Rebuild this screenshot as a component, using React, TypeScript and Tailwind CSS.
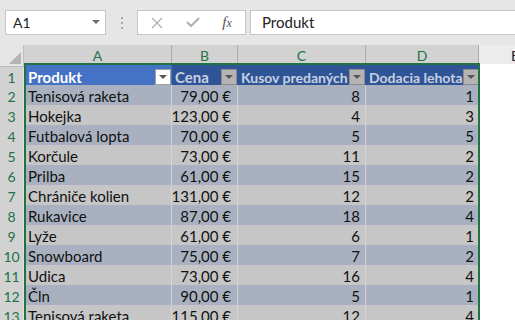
import React from "react";

const rows: [string, string, string, string][] = [
  ["Tenisová raketa", "79,00 €", "8", "1"],
  ["Hokejka", "123,00 €", "4", "3"],
  ["Futbalová lopta", "70,00 €", "5", "5"],
  ["Korčule", "73,00 €", "11", "2"],
  ["Prilba", "61,00 €", "15", "2"],
  ["Chrániče kolien", "131,00 €", "12", "2"],
  ["Rukavice", "87,00 €", "18", "4"],
  ["Lyže", "61,00 €", "6", "1"],
  ["Snowboard", "75,00 €", "7", "2"],
  ["Udica", "73,00 €", "16", "4"],
  ["Čln", "90,00 €", "5", "1"],
  ["Tenisová raketa", "115,00 €", "12", "4"],
];

function FilterBtn({ active }: { active?: boolean }) {
  return (
    <div
      className={
        "w-[16px] h-[16px] shrink-0 flex items-center justify-center border " +
        (active ? "bg-white border-[#a0a0a0]" : "bg-[#b4b4b4] border-[#8c8c8c]")
      }
    >
      <svg width="8" height="5" viewBox="0 0 8 5">
        <path d="M0 0 L8 0 L4 4 Z" fill="#555" />
      </svg>
    </div>
  );
}

const grid = "grid grid-cols-[24px_148px_66px_128px_113px_36px]";

export default function App() {
  return (
    <div
      className="w-[515px] h-[320px] overflow-hidden bg-[#e6e6e6] relative"
      style={{ fontFamily: "Lato, 'Liberation Sans', sans-serif" }}
    >
      {/* toolbar */}
      <div className="h-[45px] flex items-center pl-[5px]">
        <div className="w-[101px] h-[25px] bg-white border border-[#c6c6c6] flex items-center justify-between pl-[7px] pr-[5px] text-[14px] text-[#222]">
          <span>A1</span>
          <svg width="8" height="5" viewBox="0 0 8 5">
            <path d="M0 0 L8 0 L4 4 Z" fill="#6e6e6e" />
          </svg>
        </div>
        <div className="w-[31px] flex flex-col items-center gap-[3px]">
          <div className="w-[2px] h-[2px] bg-[#a8a8a8]" />
          <div className="w-[2px] h-[2px] bg-[#a8a8a8]" />
          <div className="w-[2px] h-[2px] bg-[#a8a8a8]" />
        </div>
        <div className="w-[109px] h-[25px] bg-white border border-[#c6c6c6] flex items-center">
          <div className="w-[38px] flex justify-center">
            <svg width="12" height="12" viewBox="0 0 12 12">
              <path d="M1 1 L11 11 M11 1 L1 11" stroke="#b0b0b0" strokeWidth="1.3" />
            </svg>
          </div>
          <div className="w-[34px] flex justify-center">
            <svg width="14" height="11" viewBox="0 0 14 11">
              <path d="M1 5 L5 9 L13 1" stroke="#b0b0b0" strokeWidth="2" fill="none" />
            </svg>
          </div>
          <div
            className="w-[34px] flex justify-center items-baseline italic text-[#555] leading-none"
            style={{ fontFamily: "'Liberation Serif', serif" }}
          >
            <span className="text-[15px]">f</span>
            <span className="text-[12px]">x</span>
          </div>
        </div>
        <div className="ml-[4px] flex-1 h-[25px] bg-white border border-[#c6c6c6] border-r-0 flex items-center pl-[11px] text-[15px] text-[#222]">
          Produkt
        </div>
      </div>

      {/* column headers */}
      <div className={grid + " h-[19px] text-[14px]"}>
        <div className="bg-[#e6e6e6] border-r border-b border-[#bdbdbd] relative">
          <svg className="absolute right-[2px] bottom-[2px]" width="12" height="12" viewBox="0 0 12 12">
            <path d="M12 0 L12 12 L0 12 Z" fill="#b4b4b4" />
          </svg>
        </div>
        {["A", "B", "C", "D"].map((c) => (
          <div
            key={c}
            className="bg-[#d2d2d2] border-r border-b border-[#ababab] flex items-center justify-center text-[#217346]"
          >
            {c}
          </div>
        ))}
        <div className="bg-[#ececec] border-b border-[#bdbdbd] flex items-center justify-end text-[#222]">
          <span className="-mr-[4px]">E</span>
        </div>
      </div>

      {/* header row */}
      <div className={grid + " h-[21px] text-[14px]"}>
        <div className="bg-[#d2d2d2] border-r border-b border-[#e0e0e0] flex items-center justify-center text-[#217346] pt-[2px]">
          1
        </div>
        <div className="bg-[#4472c4] border-b border-[#2f528f] flex items-center justify-between pl-[4px] pr-[1px] pt-[2px] font-bold text-white text-[15px]">
          <span>Produkt</span>
          <FilterBtn active />
        </div>
        <div className="bg-[#2f5597] border-b border-[#2f528f] flex items-center justify-between pl-[3px] pr-[1px] pt-[2px] font-bold text-[#c8d0e0] text-[15px]">
          <span>Cena</span>
          <FilterBtn />
        </div>
        <div className="bg-[#2f5597] border-b border-[#2f528f] flex items-center justify-between pl-[3px] pr-[1px] pt-[2px] font-bold text-[#c8d0e0]">
          <span className="whitespace-nowrap">Kusov predaných</span>
          <FilterBtn />
        </div>
        <div className="bg-[#2f5597] border-b border-[#2f528f] flex items-center justify-between pl-[3px] pr-[1px] pt-[2px] font-bold text-[#c8d0e0]">
          <span className="whitespace-nowrap">Dodacia lehota</span>
          <FilterBtn />
        </div>
        <div className="bg-white border-b border-[#d4d4d4]" />
      </div>

      {/* data rows */}
      {rows.map((r, i) => {
        const band = i % 2 === 0 ? "bg-[#a9b1c0]" : "bg-[#c6c6c6]";
        return (
          <div key={i} className={grid + " h-[20px] text-[15px] text-[#111]"}>
            <div className="bg-[#d2d2d2] border-r border-b border-[#e0e0e0] flex items-center justify-center text-[#217346] text-[14px]">
              {i + 2}
            </div>
            <div className={band + " border-r border-b border-r-[#d0d4da] border-b-[#8497b8] flex items-center pl-[4px] whitespace-nowrap"}>
              {r[0]}
            </div>
            <div className={band + " border-r border-b border-r-[#d0d4da] border-b-[#8497b8] flex items-center justify-end pr-[6px] whitespace-nowrap"}>
              {r[1]}
            </div>
            <div className={band + " border-r border-b border-r-[#d0d4da] border-b-[#8497b8] flex items-center justify-end pr-[5px]"}>
              {r[2]}
            </div>
            <div className={band + " border-b border-b-[#8497b8] flex items-center justify-end pr-[5px]"}>
              {r[3]}
            </div>
            <div className="bg-white border-b border-[#d4d4d4]" />
          </div>
        );
      })}

      {/* selection border */}
      <div className="absolute left-[24px] top-[63px] w-[456px] h-[280px] border-2 border-[#217346] pointer-events-none" />
    </div>
  );
}
